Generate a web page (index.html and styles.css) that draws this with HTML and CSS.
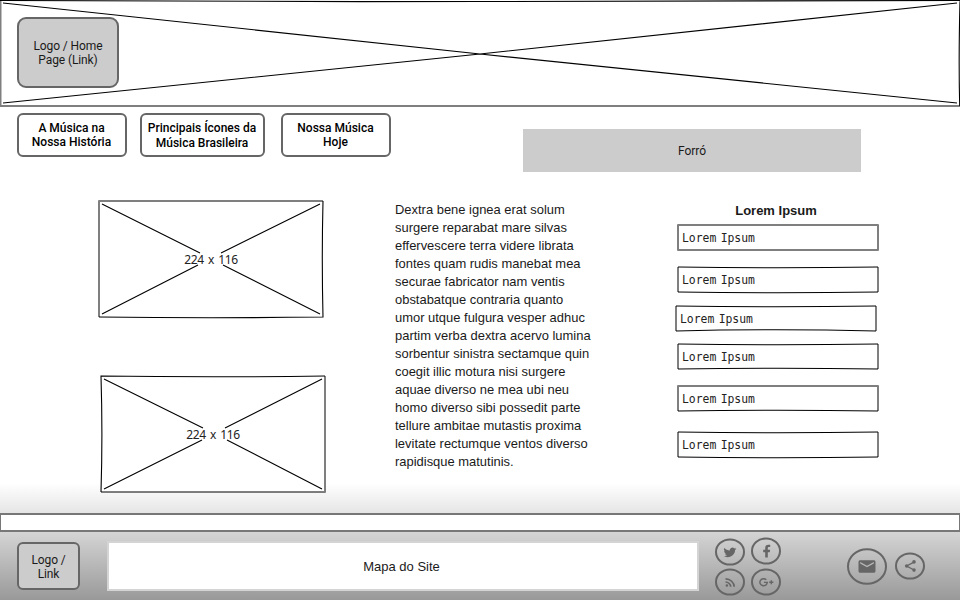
FILE: index.html
```html
<!DOCTYPE html>
<html lang="pt-BR">
<head>
<meta charset="utf-8">
<title>Forró</title>
<link rel="stylesheet" href="styles.css">
</head>
<body>
<div class="page">
  <header class="banner">
    <svg class="banner-art" viewBox="0 0 960 107" aria-hidden="true">
      <path class="frame-fill" d="M0 0H960V107H0Z"/>
      <path class="edge" d="M0 106H960M.5 1V106"/>
      <path class="ink" d="M0 .5Q240 2 480 1.5T960 .5Q958.5 60 959.7 106"/>
      <path class="ink" d="M3 3L480 54L957 103M3 103L480 54L957 3"/>
    </svg>
    <a class="logo logo-top">Logo / Home<br>Page (Link)</a>
  </header>

  <div class="topbar">
    <nav class="menu">
      <a class="tab">A Música na<br>Nossa História</a>
      <a class="tab tab-wide">Principais Ícones da<br>Música Brasileira</a>
      <a class="tab">Nossa Música<br>Hoje</a>
    </nav>
    <h1 class="heading">Forró</h1>
  </div>

  <main class="content">
    <div class="pictures">
      <svg class="picture" viewBox="0 0 226 118">
        <path class="frame-fill" d="M1 1H225V117H1Z"/>
        <path class="edge" d="M225 1H1V117"/>
        <path class="ink" d="M225 1Q223.6 60 225 117Q113 118.4 1 117"/>
        <path class="ink" d="M4 4L102 53M222 4L123 53M4 114L100 65M222 114L125 65"/>
        <text class="size" x="113" y="64">224 x 116</text>
      </svg>
      <svg class="picture picture-second" viewBox="0 0 226 118">
        <path class="frame-fill" d="M1 1H225V117H1Z"/>
        <path class="edge" d="M225 1V117H1"/>
        <path class="ink" d="M225 1Q113 2.6 1 1Q2.8 60 1 117"/>
        <path class="ink" d="M4 4L103 53M222 4L125 53M4 114L102 65M222 114L127 65"/>
        <text class="size" x="113" y="64">224 x 116</text>
      </svg>
    </div>

    <p class="article">Dextra bene ignea erat solum<br>surgere reparabat mare silvas<br>effervescere terra videre librata<br>fontes quam rudis manebat mea<br>securae fabricator nam ventis<br>obstabatque contraria quanto<br>umor utque fulgura vesper adhuc<br>partim verba dextra acervo lumina<br>sorbentur sinistra sectamque quin<br>coegit illic motura nisi surgere<br>aquae diverso ne mea ubi neu<br>homo diverso sibi possedit parte<br>tellure ambitae mutastis proxima<br>levitate rectumque ventos diverso<br>rapidisque matutinis.</p>

    <section class="list">
      <h2 class="list-title">Lorem Ipsum</h2>
      <div class="field">
        <svg class="field-art" viewBox="0 0 202 27"><path class="edge" d="M1 1H201V26H1Z"/></svg>
        <span>Lorem Ipsum</span>
      </div>
      <div class="field gap-15">
        <svg class="field-art" viewBox="0 0 202 27"><path class="edge" d="M1 1V26M201 1V26"/><path class="ink" d="M1 1Q101 2.6 201 1M1 26Q101 27.6 201 26"/></svg>
        <span>Lorem Ipsum</span>
      </div>
      <div class="field gap-12 shifted">
        <svg class="field-art" viewBox="0 0 202 27"><path class="edge" d="M1 1V26M201 1V26"/><path class="ink" d="M1 1Q101 2.6 201 1M1 26Q101 23.6 201 26"/></svg>
        <span>Lorem Ipsum</span>
      </div>
      <div class="field gap-11">
        <svg class="field-art" viewBox="0 0 202 27"><path class="edge" d="M1 1V26M201 1V26"/><path class="ink" d="M1 1Q101 2.6 201 1M1 26Q101 24.4 201 26"/></svg>
        <span>Lorem Ipsum</span>
      </div>
      <div class="field gap-15">
        <svg class="field-art" viewBox="0 0 202 27"><path class="edge" d="M1 26V1H201V26"/><path class="ink" d="M1 26Q101 24.4 201 26"/></svg>
        <span>Lorem Ipsum</span>
      </div>
      <div class="field gap-19">
        <svg class="field-art" viewBox="0 0 202 27"><path class="edge" d="M1 1V26M201 1V26"/><path class="ink" d="M1 1Q101 2.6 201 1M1 26Q101 27.6 201 26"/></svg>
        <span>Lorem Ipsum</span>
      </div>
    </section>
  </main>

  <div class="strip"></div>

  <footer class="footer">
    <a class="logo logo-bottom">Logo /<br>Link</a>
    <div class="sitemap">Mapa do Site</div>
    <div class="social">
      <svg class="round" viewBox="0 0 30 28">
        <ellipse cx="15" cy="14" rx="14" ry="12.6"/>
        <path transform="translate(8.6 8.5) scale(.54 .49)" d="M23.6 4.6c-.9.4-1.800.7-2.800.8 1-.6 1.800-1.600 2.200-2.700-.9.6-2 1-3.100 1.200a4.900 4.900 0 0 0-8.400 4.500C7.400 8.200 3.800 6.200 1.400 3.200a4.900 4.900 0 0 0 1.500 6.600c-.8 0-1.600-.2-2.200-.6v.1c0 2.400 1.700 4.400 3.900 4.800-.7.200-1.500.2-2.200.1.600 2 2.400 3.400 4.600 3.400A9.900 9.900 0 0 1-.3 19.600 13.900 13.900 0 0 0 7.200 21.800c9.100 0 14-7.500 14-14v-.6c1-.7 1.800-1.600 2.400-2.600z"/>
      </svg>
      <svg class="round raised" viewBox="0 0 30 28">
        <ellipse cx="15" cy="14" rx="14" ry="12.6"/>
        <path d="M14.200 20.400v-5.200h-2v-2.400h2v-1.700c0-2.200 1.200-3.300 3.100-3.300h1.900v2.200h-1.200c-.9 0-1.200.4-1.200 1.100v1.700h2.300l-.3 2.400h-2v5.200z"/>
      </svg>
      <svg class="round" viewBox="0 0 30 28">
        <ellipse cx="15" cy="14" rx="14" ry="12.6"/>
        <path transform="translate(8.100 7.600) scale(.61 .56)" d="M6.180 15.640a2.180 2.180 0 1 1 0 4.360 2.180 2.180 0 0 1 0-4.360zM4 4.440A15.560 15.560 0 0 1 19.560 20h-2.830A12.730 12.730 0 0 0 4 7.270zM4 10.100A9.900 9.900 0 0 1 13.900 20h-2.830A7.070 7.070 0 0 0 4 12.930z"/>
      </svg>
      <svg class="round" viewBox="0 0 30 28">
        <ellipse cx="15" cy="14" rx="14" ry="12.6"/>
        <path class="plus" d="M15.300 11.800A3.700 3.500 0 1 0 16.300 14.400H12.900M20.300 12.200V16.200M18.200 14.200H22.400"/>
      </svg>
    </div>
    <svg class="mail" viewBox="0 0 40 37">
      <ellipse cx="20" cy="18.500" rx="19" ry="17.200"/>
      <path transform="translate(9.800 9.200) scale(.85 .78)" d="M20 4H4c-1.100 0-2 .9-2 2v12c0 1.100.9 2 2 2h16c1.100 0 2-.9 2-2V6c0-1.100-.9-2-2-2zm0 4l-8 5-8-5V6l8 5 8-5z"/>
    </svg>
    <svg class="round share" viewBox="0 0 30 28">
      <ellipse cx="15" cy="14" rx="14" ry="12.6"/>
      <path class="link" d="M19 10.200L11.700 14L19 18"/>
      <circle cx="19" cy="9.900" r="1.800"/><circle cx="11.700" cy="14" r="1.800"/><circle cx="19" cy="18.100" r="1.800"/>
    </svg>
  </footer>
</div>
</body>
</html>
```
FILE: styles.css
```css
* { box-sizing: border-box; }
body { margin: 0; color: #1a1a1a; font: 12px/14px Roboto, sans-serif; }
svg { display: block; overflow: visible; }
.page {
  width: 960px;
  height: 600px;
  display: flex;
  flex-direction: column;
  overflow: hidden;
  background: linear-gradient(#fff 483px, #999 600px);
}
.frame-fill { fill: #fff; }
.edge { fill: none; stroke: #000; stroke-opacity: .5; stroke-width: 2; stroke-linejoin: round; }
.ink { fill: none; stroke: #000; stroke-width: 1.1; }

.banner { position: relative; height: 107px; padding: 17px; }
.banner-art { position: absolute; inset: 0; width: 960px; height: 107px; }
.logo {
  position: relative;
  display: flex;
  align-items: center;
  justify-content: center;
  text-align: center;
  background: #ccc;
  border: 2px solid #666;
  letter-spacing: -.1px;
}
.logo-top { width: 102px; height: 71px; border-radius: 9px; }

.topbar { display: flex; height: 65px; padding: 6px 99px 0 17px; justify-content: space-between; }
.menu { display: flex; }
.tab {
  display: flex;
  align-items: center;
  justify-content: center;
  width: 110px;
  height: 44px;
  padding-right: 1px;
  border: 2px solid #666;
  border-radius: 6px;
  background: #fff;
  text-align: center;
  font-weight: 500;
  color: #000;
}
.tab-wide { width: 125px; margin: 0 16px 0 13px; padding-top: 2px; line-height: 15px; }
.heading {
  width: 338px;
  height: 43px;
  margin: 16px 0 0;
  background: #ccc;
  font-size: 12px;
  font-weight: 400;
  line-height: 45px;
  text-align: center;
}

.content { display: grid; grid-template-columns: 297px 280px 204px; padding: 28px 0 0 98px; height: 341px; }
.picture { width: 226px; height: 118px; }
.picture-second { margin: 57px 0 0 2px; }
.size { font: 12px "Noto Sans", sans-serif; letter-spacing: -.3px; word-spacing: 1.3px; text-anchor: middle; fill: #222; }
.article { margin: 1px 0 0; font: 12.95px/18px "Liberation Sans", sans-serif; white-space: nowrap; }
.list { padding-left: 2px; }
.list-title { margin: 2px 4px 4px 0; font: bold 13px/18px "Liberation Sans", sans-serif; text-align: center; }
.field { position: relative; width: 202px; height: 27px; padding-left: 5px; font: 11.4px/28px "DejaVu Sans Mono", monospace; word-spacing: -2.5px; color: #222; }
.field-art { position: absolute; inset: 0; width: 202px; height: 27px; }
.gap-15 { margin-top: 15px; }
.gap-12 { margin-top: 12px; }
.gap-11 { margin-top: 11px; }
.gap-19 { margin-top: 19px; }
.shifted { margin-left: -2px; }

.strip { height: 19px; border: 2px solid #777; border-width: 2px 1px; background: #fff; }

.footer { display: flex; height: 68px; padding: 10px 0 0 17px; }
.logo-bottom { width: 63px; height: 48px; border-radius: 6px; padding-top: 2px; }
.sitemap { width: 592px; height: 50px; margin: -1px 0 0 27px; border: 2px solid #d4d4d4; background: #fff; text-align: center; font: 13px/48px "Liberation Sans", sans-serif; padding-right: 3px; }
.social { display: grid; grid-template-columns: 30px 30px; grid-template-rows: 28px 28px; gap: 2px 6px; margin: -4px 0 0 16px; }
.round { width: 30px; height: 28px; fill: #666; }
.raised { margin-top: -1px; }
.round ellipse, .mail ellipse { fill: none; stroke: #666; stroke-width: 2; }
.plus, .link { fill: none; stroke: #666; stroke-width: 1.4; }
.mail { width: 40px; height: 37px; margin: 6px 8px 0 66px; fill: #666; }
.share { margin-top: 10px; }
```
